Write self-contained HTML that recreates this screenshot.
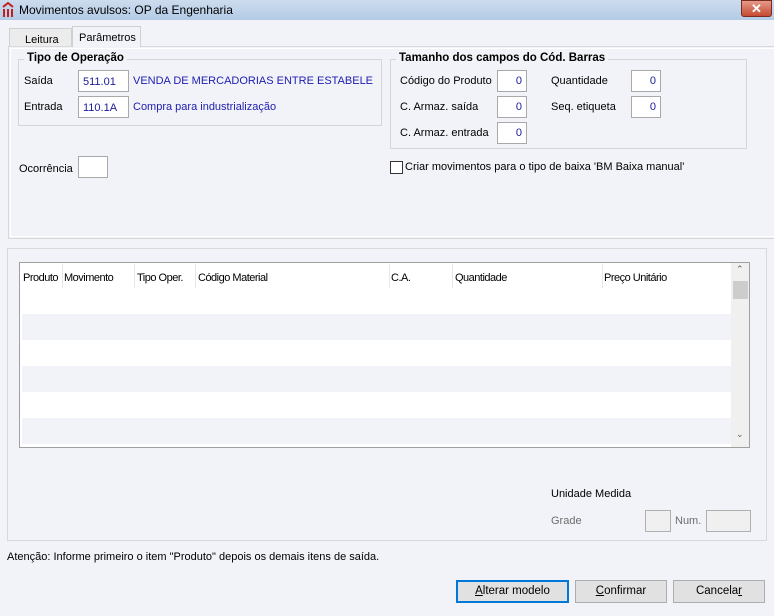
<!DOCTYPE html>
<html><head><meta charset="utf-8"><style>
*{margin:0;padding:0;box-sizing:border-box}
body{width:774px;height:616px;background:#f2f3f8;font-family:"Liberation Sans",sans-serif;font-size:11px;color:#000;position:relative;overflow:hidden}
.a{position:absolute;white-space:nowrap}
.box{position:absolute;background:#fff;border:1px solid #a9a9a9}
.num{font-size:11px;color:#1a1a9a;text-align:right;padding-right:4px;line-height:20px}
.blue{color:#2020b0}
.btn{position:absolute;height:23px;border:1px solid #adadad;background:#e1e1e1;text-align:center;line-height:21px;font-size:11.5px}
.h{top:9px;letter-spacing:-0.5px;font-size:11px}
</style></head><body>
<div class="a" style="left:0;top:0;width:774px;height:20px;background:linear-gradient(#cddcee,#b3cbe6)"></div>
<div class="a" style="left:2px;top:2px;width:12px;height:15px;">
<svg width="12" height="15"><path d="M1 5 L6 1 L11 5" stroke="#c02020" stroke-width="2" fill="none"/><rect x="1" y="7" width="2" height="8" fill="#c02020"/><rect x="5" y="7" width="2" height="8" fill="#c02020"/><rect x="9" y="7" width="2" height="8" fill="#c02020"/></svg></div>
<div class="a" style="left:19px;top:3px;font-size:12px;">Movimentos avulsos: OP da Engenharia</div>
<div class="a" style="left:741px;top:0;width:31px;height:17px;background:linear-gradient(#e59a88,#c54a32);border:1px solid #7a2a20;border-radius:0 0 3px 3px;color:#fff;font-weight:bold;text-align:center;line-height:15px;font-size:13px">✕</div>

<div class="a" style="left:9px;top:28px;width:63px;height:19px;border:1px solid #d0d0d0;border-bottom:none;background:#ececec;padding:5px 0 0 15px">Leitura</div>
<div class="a" style="left:72px;top:26px;width:69px;height:21px;border:1px solid #d0d0d0;border-bottom:none;background:#f2f3f8;padding:5px 0 0 6px;z-index:2">Parâmetros</div>
<div class="a" style="left:8px;top:46px;width:766px;height:193px;border:1px solid #d8d8d8;border-right:none"></div>
<div class="a" style="left:10px;top:48px;width:764px;height:189px;border:1px solid #fff;border-right:none"></div>

<div class="a" style="left:18px;top:59px;width:364px;height:67px;border:1px solid #d5d5d5"></div>
<div class="a" style="left:24px;top:52px;background:#f2f3f8;padding:0 3px;font-weight:bold;font-size:11.5px">Tipo de Operação</div>
<div class="a" style="left:24px;top:75px">Saída</div>
<div class="box" style="left:78px;top:70px;width:51px;height:22px;padding:5px 0 0 4px;color:#1a1a9a">511.01</div>
<div class="a blue" style="left:133px;top:75px;width:240px;overflow:hidden">VENDA DE MERCADORIAS ENTRE ESTABELECIMENTOS</div>
<div class="a" style="left:24px;top:101px">Entrada</div>
<div class="box" style="left:78px;top:96px;width:51px;height:22px;padding:5px 0 0 4px;color:#1a1a9a">110.1A</div>
<div class="a blue" style="left:133px;top:101px">Compra para industrialização</div>

<div class="a" style="left:390px;top:59px;width:357px;height:90px;border:1px solid #d5d5d5"></div>
<div class="a" style="left:396px;top:52px;background:#f2f3f8;padding:0 3px;font-weight:bold;font-size:11.5px">Tamanho dos campos do Cód. Barras</div>
<div class="a" style="left:400px;top:75px">Código do Produto</div>
<div class="box num" style="left:497px;top:70px;width:30px;height:22px">0</div>
<div class="a" style="left:551px;top:75px">Quantidade</div>
<div class="box num" style="left:631px;top:70px;width:30px;height:22px">0</div>
<div class="a" style="left:400px;top:101px">C. Armaz. saída</div>
<div class="box num" style="left:497px;top:96px;width:30px;height:22px">0</div>
<div class="a" style="left:551px;top:101px">Seq. etiqueta</div>
<div class="box num" style="left:631px;top:96px;width:30px;height:22px">0</div>
<div class="a" style="left:400px;top:127px">C. Armaz. entrada</div>
<div class="box num" style="left:497px;top:122px;width:30px;height:22px">0</div>

<div class="a" style="left:390px;top:161px;width:13px;height:13px;border:1px solid #333;background:#fff"></div>
<div class="a" style="left:405px;top:161px">Criar movimentos para o tipo de baixa 'BM Baixa manual'</div>

<div class="a" style="left:19px;top:163px">Ocorrência</div>
<div class="box" style="left:78px;top:156px;width:30px;height:22px"></div>

<div class="a" style="left:7px;top:248px;width:760px;height:293px;border:1px solid #d8d8d8"></div>
<div class="a" style="left:19px;top:262px;width:731px;height:186px;border:1px solid #a0a0a0;background:#fff;overflow:hidden">
 <div class="a" style="left:2px;top:51px;width:712px;height:26px;background:#f2f3f8"></div>
 <div class="a" style="left:2px;top:103px;width:712px;height:26px;background:#f2f3f8"></div>
 <div class="a" style="left:2px;top:155px;width:712px;height:26px;background:#f2f3f8"></div>
 <div class="a h" style="left:3px">Produto</div>
 <div class="a" style="left:42px;top:1px;width:1px;height:24px;background:#e6e6e6"></div>
 <div class="a h" style="left:44px">Movimento</div>
 <div class="a" style="left:114px;top:1px;width:1px;height:24px;background:#e6e6e6"></div>
 <div class="a h" style="left:117px">Tipo Oper.</div>
 <div class="a" style="left:175px;top:1px;width:1px;height:24px;background:#e6e6e6"></div>
 <div class="a h" style="left:178px">Código Material</div>
 <div class="a" style="left:369px;top:1px;width:1px;height:24px;background:#e6e6e6"></div>
 <div class="a h" style="left:371px">C.A.</div>
 <div class="a" style="left:432px;top:1px;width:1px;height:24px;background:#e6e6e6"></div>
 <div class="a h" style="left:435px">Quantidade</div>
 <div class="a" style="left:582px;top:1px;width:1px;height:24px;background:#e6e6e6"></div>
 <div class="a h" style="left:584px">Preço Unitário</div>
 <div class="a" style="left:711px;top:0;width:18px;height:184px;background:#f0f0f0"></div>
 <div class="a" style="left:713px;top:18px;width:15px;height:18px;background:#cdcdcd"></div>
 <div class="a" style="left:716px;top:1px;font-size:9px;color:#606060">&#8963;</div>
 <div class="a" style="left:716px;top:166px;font-size:9px;color:#606060">&#8964;</div>
</div>

<div class="a" style="left:551px;top:488px">Unidade Medida</div>
<div class="a" style="left:551px;top:515px;color:#6d6d6d">Grade</div>
<div class="a" style="left:645px;top:510px;width:26px;height:22px;border:1px solid #b0b0b0;background:#f0f0f0"></div>
<div class="a" style="left:675px;top:515px;color:#6d6d6d">Num.</div>
<div class="a" style="left:706px;top:510px;width:45px;height:22px;border:1px solid #b0b0b0;background:#f0f0f0"></div>

<div class="a" style="left:7px;top:551px">Atenção: Informe primeiro o item "Produto" depois os demais itens de saída.</div>

<div class="btn" style="left:456px;top:580px;width:113px;border:2px solid #0078d7;line-height:19px"><u>A</u>lterar modelo</div>
<div class="btn" style="left:575px;top:580px;width:92px"><u>C</u>onfirmar</div>
<div class="btn" style="left:673px;top:580px;width:92px">Cancela<u>r</u></div>
</body></html>
